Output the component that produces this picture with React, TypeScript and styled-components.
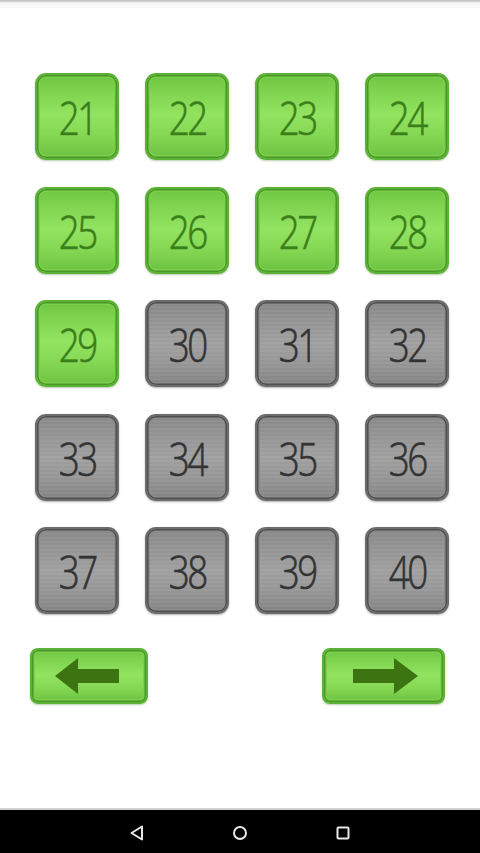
import React from "react";
import styled, { createGlobalStyle, css } from "styled-components";

const Global = createGlobalStyle`
  html, body { margin: 0; padding: 0; background: #ffffff; }
  body { font-family: "Liberation Sans", Arial, sans-serif; }
  * { box-sizing: border-box; }
`;

const Page = styled.div`
  width: 480px;
  height: 853px;
  display: flex;
  flex-direction: column;
  background: #ffffff;
  overflow: hidden;
`;

const TopStrip = styled.div`
  height: 8px;
  flex: none;
  background: linear-gradient(#c4c4c4 0, #c4c4c4 1px, #e2e2e2 2px, #f6f6f6 3px, #f8f8f8 8px);
`;

const Grid = styled.div`
  margin: 65px 0 0 35px;
  display: grid;
  grid-template-columns: repeat(4, 84px);
  grid-auto-rows: 87px;
  column-gap: 26px;
  row-gap: 26.5px;
`;

const greenFill = css`
  border: 2px solid #5cb236;
  box-shadow: inset 0 0 0 1.5px #4a9628, inset 0 0 0 3px #7ccf4d, 0 1px 2px rgba(60, 110, 30, 0.35);
  background: linear-gradient(
    180deg,
    #6cc541 0%,
    #7fd44f 20%,
    #92e361 48%,
    #85d854 72%,
    #6bc240 100%
  );
`;

const grayFill = css`
  border: 2px solid #6c6c6c;
  box-shadow: inset 0 0 0 1.5px #4f4f4f, inset 0 0 0 3px #8c8c8c, 0 1px 2px rgba(0, 0, 0, 0.3);
  background:
    repeating-linear-gradient(180deg, rgba(255,255,255,0.025) 0 2px, rgba(0,0,0,0.02) 2px 4px),
    linear-gradient(180deg, #8a8a8a 0%, #979797 25%, #a2a2a2 50%, #989898 75%, #858585 100%);
`;

const Tile = styled.div<{ $open: boolean }>`
  width: 84px;
  height: 87px;
  border-radius: 11px;
  display: flex;
  align-items: center;
  justify-content: center;
  ${(p) => (p.$open ? greenFill : grayFill)}
`;

const Num = styled.span<{ $open: boolean }>`
  display: inline-block;
  font-family: "Open Sans", "Liberation Sans", Arial, sans-serif;
  font-weight: 300;
  font-size: 46px;
  line-height: 1;
  letter-spacing: -3px;
  color: ${(p) => (p.$open ? "#3b7f1a" : "#333333")};
  transform: scaleX(0.8);
  margin-top: 1px;
  -webkit-text-stroke: 0.7px currentColor;
`;

const ArrowRow = styled.div`
  margin-top: 34px;
  display: flex;
  justify-content: space-between;
  padding: 0 35px 0 30px;
`;

const ArrowButton = styled.div<{ $w: number }>`
  width: ${(p) => p.$w}px;
  height: 56px;
  border-radius: 8px;
  display: flex;
  align-items: center;
  justify-content: center;
  ${greenFill}
`;

const Spacer = styled.div`
  flex: 1;
`;

const NavBar = styled.div`
  height: 45px;
  flex: none;
  background: #000;
  border-top: 2px solid #d0d0d0;
  display: flex;
  align-items: center;
  justify-content: center;
`;

const NavSlot = styled.div`
  width: 103px;
  display: flex;
  justify-content: center;
  align-items: center;
  margin-top: 2px;
`;

const LeftArrow = () => (
  <svg width="68" height="38" viewBox="0 0 68 38">
    <polygon points="0,19 23,1 23,12 64,12 64,26 23,26 23,37" fill="#3d7412" />
  </svg>
);

const RightArrow = () => (
  <svg width="68" height="38" viewBox="0 0 68 38">
    <polygon points="3,12 44,12 44,1 68,19 44,37 44,26 3,26" fill="#3d7412" />
  </svg>
);

export default function App() {
  const nums = Array.from({ length: 20 }, (_, i) => 21 + i);
  return (
    <Page>
      <Global />
      <TopStrip />
      <Grid>
        {nums.map((n) => {
          const open = n <= 29;
          return (
            <Tile key={n} $open={open}>
              <Num $open={open}>{n}</Num>
            </Tile>
          );
        })}
      </Grid>
      <ArrowRow>
        <ArrowButton $w={118}>
          <LeftArrow />
        </ArrowButton>
        <ArrowButton $w={123}>
          <RightArrow />
        </ArrowButton>
      </ArrowRow>
      <Spacer />
      <NavBar>
        <NavSlot>
          <svg width="14" height="16" viewBox="0 0 14 16">
            <polygon points="12,1.5 12,14.5 1.5,8" fill="none" stroke="#e8e8e8" strokeWidth="2" strokeLinejoin="round" />
          </svg>
        </NavSlot>
        <NavSlot>
          <svg width="16" height="16" viewBox="0 0 16 16">
            <circle cx="8" cy="8" r="6" fill="none" stroke="#e8e8e8" strokeWidth="2" />
          </svg>
        </NavSlot>
        <NavSlot>
          <svg width="14" height="14" viewBox="0 0 14 14">
            <rect x="1.5" y="1.5" width="11" height="11" rx="1" fill="none" stroke="#e8e8e8" strokeWidth="2" />
          </svg>
        </NavSlot>
      </NavBar>
    </Page>
  );
}
